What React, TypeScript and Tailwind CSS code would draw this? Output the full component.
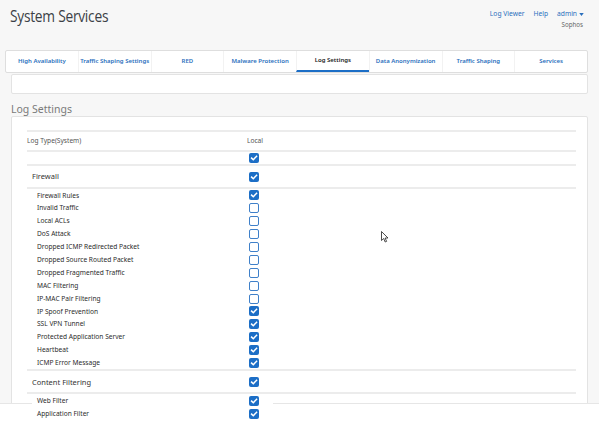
import React from "react";

const Check = ({ on }: { on: boolean }) =>
  on ? (
    <span className="w-[10px] h-[10px] rounded-[2px] bg-[#1c6ec6] flex items-center justify-center shrink-0">
      <svg viewBox="0 0 10 10" className="w-[8px] h-[8px]">
        <path d="M2 5.2 L4.1 7.2 L8.2 2.9" stroke="white" strokeWidth="1.9" fill="none" strokeLinecap="square" />
      </svg>
    </span>
  ) : (
    <span className="w-[10px] h-[10px] rounded-[2px] border border-[#3f80c9] bg-white shrink-0" />
  );

const firewall: [string, boolean][] = [
  ["Firewall Rules", true],
  ["Invalid Traffic", false],
  ["Local ACLs", false],
  ["DoS Attack", false],
  ["Dropped ICMP Redirected Packet", false],
  ["Dropped Source Routed Packet", false],
  ["Dropped Fragmented Traffic", false],
  ["MAC Filtering", false],
  ["IP-MAC Pair Filtering", false],
  ["IP Spoof Prevention", true],
  ["SSL VPN Tunnel", true],
  ["Protected Application Server", true],
  ["Heartbeat", true],
  ["ICMP Error Message", true],
];

const content: [string, boolean][] = [
  ["Web Filter", true],
  ["Application Filter", true],
];

const tabs = [
  "High Availability",
  "Traffic Shaping Settings",
  "RED",
  "Malware Protection",
  "Log Settings",
  "Data Anonymization",
  "Traffic Shaping",
  "Services",
];

const SubRow = ({ label, on, top }: { label: string; on: boolean; top?: boolean }) => (
  <div className={`${top ? "h-[13px]" : "h-[12.9px]"} flex items-center`}>
    <div className={`ml-[5px] w-[241px] h-full flex items-center ${top ? "relative z-10 bg-white" : ""}`}>
      <span className="pl-[5px] w-[217px] text-[6.6px] text-[#2b2b2b]">{label}</span>
      <Check on={on} />
    </div>
  </div>
);

export default function App() {
  return (
    <div
      className="relative w-[599px] h-[431px] overflow-hidden bg-[#f7f7f7]"
      style={{ fontFamily: "'Noto Sans', 'Liberation Sans', sans-serif" }}
    >
      {/* header */}
      <div className="flex justify-between pl-[10px] pr-[15px] pt-[5px] h-[50px]">
        <div className="text-[16px] leading-[22px] text-[#3b3f46] tracking-[-0.3px]" style={{ fontFamily: "'Open Sans', sans-serif" }}>
          <span className="inline-block" style={{ transform: "scaleX(0.86)", transformOrigin: "left" }}>System Services</span>
        </div>
        <div className="flex flex-col items-end pt-[4px]">
          <div className="flex items-center gap-[9px] text-[6.7px] text-[#2a6fbd]">
            <span>Log Viewer</span>
            <span>Help</span>
            <span className="flex items-center gap-[2px]">
              admin
              <svg viewBox="0 0 6 4" className="w-[5px] h-[3px]">
                <path d="M0 0 L6 0 L3 4 Z" fill="#2a6fbd" />
              </svg>
            </span>
          </div>
          <div className="text-[6.2px] text-[#666] mt-[1px] mr-[1px]">Sophos</div>
        </div>
      </div>

      {/* tabs */}
      <div className="ml-[5px] w-[583px] h-[23px] bg-white border border-[#dedede] rounded-[2px] flex">
        {tabs.map((t, i) => {
          const active = t === "Log Settings";
          return (
            <div
              key={t}
              className={`flex-1 flex items-center justify-center text-[6px] font-semibold ${
                i > 0 ? "border-l border-[#f2f2f2]" : ""
              } ${active ? "text-[#222] border-b-2 border-b-[#1c6ec6] font-bold" : "text-[#2a6fbd]"}`}
            >
              {t}
            </div>
          );
        })}
      </div>

      {/* second card */}
      <div className="ml-[11px] mt-[1px] w-[577px] h-[20px] bg-white border border-[#e3e3e3] rounded-[2px]" />

      {/* section title */}
      <div className="ml-[11px] mt-[9px] text-[10.5px] leading-[12px] text-[#7a7a7a]">Log Settings</div>

      {/* main card */}
      <div className="ml-[11px] mt-[1px] w-[577px] h-[320px] bg-white border border-[#e3e3e3] rounded-[2px] pt-[13px] pl-[15px]">
        <div className="w-[549px]">
          <div className="border-t-2 border-[#ececec] h-[20px] flex items-center">
            <span className="w-[220px] text-[6.6px] text-[#555]">Log Type(System)</span>
            <span className="text-[6.6px] text-[#555]">Local</span>
          </div>
          <div className="border-t-2 border-[#ececec] h-[14px] flex items-center">
            <span className="w-[222px]" />
            <Check on={true} />
          </div>
          <div className="border-t-2 border-[#ececec] h-[23px] flex items-center">
            <span className="pl-[5px] w-[222px] text-[7.5px] text-[#333]">Firewall</span>
            <Check on={true} />
          </div>
          <div className="border-t-2 border-[#ececec]">
            {firewall.map(([l, on]) => (
              <SubRow key={l} label={l} on={on} />
            ))}
          </div>
          <div className="border-t-2 border-[#ececec] h-[23px] flex items-center pt-[1px]">
            <span className="pl-[5px] w-[222px] text-[7.5px] text-[#333]">Content Filtering</span>
            <Check on={true} />
          </div>
          <div className="border-t-2 border-[#ececec]">
            {content.map(([l, on]) => (
              <SubRow key={l} label={l} on={on} top />
            ))}
          </div>
        </div>
      </div>

      {/* footer overlay */}
      <div className="absolute left-0 right-0 top-[403px] h-[28px] bg-white border-t border-[#e6e6e6]" />

      {/* mouse cursor */}
      <svg className="absolute left-[381px] top-[231px] w-[8px] h-[12px]" viewBox="0 0 8 12">
        <path d="M0.5 0.5 L0.5 9.5 L2.7 7.5 L4.2 11 L5.6 10.4 L4.1 7 L7 7 Z" fill="white" stroke="#222" strokeWidth="0.8" />
      </svg>
    </div>
  );
}
